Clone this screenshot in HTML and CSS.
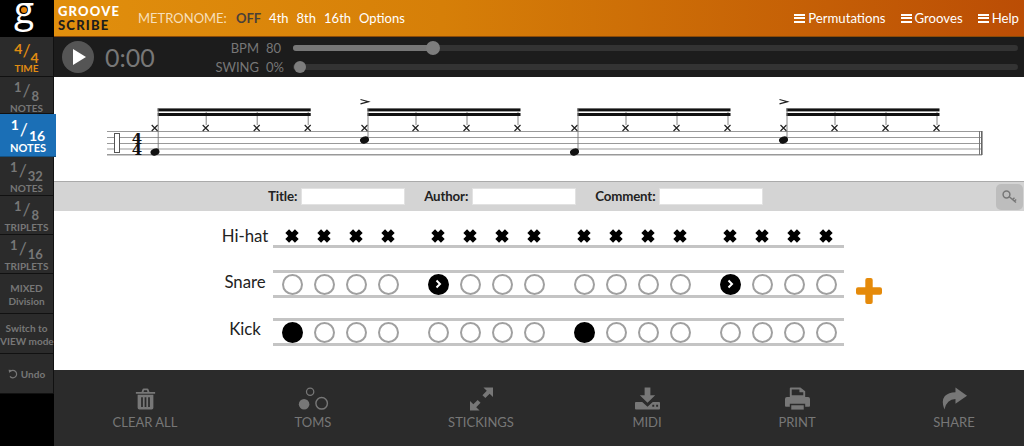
FILE: index.html
```html
<!DOCTYPE html>
<html lang="en">
<head>
  <meta charset="UTF-8">
  <title>Groove Scribe</title>
  <link rel="stylesheet" href="styles.css">
</head>
<body>

  <div class="sidebar">
    <div class="logo"><span class="logo-g">g</span><span class="logo-dot"></span></div>
    <div class="side-btn time">
      <div class="frac"><span class="num">4</span><span class="slash">/</span><span class="den">4</span></div>
      <div class="side-label">TIME</div>
    </div>
    <div class="side-btn eighth">
      <div class="frac"><span class="num">1</span><span class="slash">/</span><span class="den">8</span></div>
      <div class="side-label">NOTES</div>
    </div>
    <div class="side-btn active">
      <div class="frac"><span class="num">1</span><span class="slash">/</span><span class="den">16</span></div>
      <div class="side-label">NOTES</div>
    </div>
    <div class="side-btn">
      <div class="frac"><span class="num">1</span><span class="slash">/</span><span class="den">32</span></div>
      <div class="side-label">NOTES</div>
    </div>
    <div class="side-btn">
      <div class="frac"><span class="num">1</span><span class="slash">/</span><span class="den">8</span></div>
      <div class="side-label">TRIPLETS</div>
    </div>
    <div class="side-btn">
      <div class="frac"><span class="num">1</span><span class="slash">/</span><span class="den">16</span></div>
      <div class="side-label">TRIPLETS</div>
    </div>
    <div class="side-btn text-btn tall">MIXED<br>Division</div>
    <div class="side-btn text-btn tall">Switch to<br>VIEW mode</div>
    <div class="side-btn text-btn undo">
      <svg width="10" height="10" viewBox="0 0 10 10"><path d="M2.2 2.6 A3.7 3.7 0 1 1 2 7.4" fill="none" stroke="#777" stroke-width="1.2"/><path d="M0.6 0.8 L3.9 0.9 L1.2 4 Z" fill="#777"/></svg>
      Undo
    </div>
  </div>

  <div class="main">
    <div class="header">
      <div class="brand"><span class="groove">GROOVE</span><span class="scribe">SCRIBE</span></div>
      <div class="metronome">
        <span class="met-title">METRONOME:</span>
        <span class="met-off">OFF</span>
        <span class="met-opt">4th</span>
        <span class="met-opt">8th</span>
        <span class="met-opt">16th</span>
        <span class="met-opt">Options</span>
      </div>
      <div class="menus">
        <span class="menu"><span class="bars"></span>Permutations</span>
        <span class="menu"><span class="bars"></span>Grooves</span>
        <span class="menu"><span class="bars"></span>Help</span>
      </div>
    </div>

    <div class="playbar">
      <div class="play-btn"><span class="triangle"></span></div>
      <div class="clock">0:00</div>
      <div class="sliders">
        <div class="slider-row">
          <span class="slider-name">BPM</span><span class="slider-val">80</span>
          <div class="track"><div class="track-fill bpm-fill"></div><span class="thumb bpm-thumb"></span></div>
        </div>
        <div class="slider-row">
          <span class="slider-name">SWING</span><span class="slider-val">0%</span>
          <div class="track"><span class="thumb swing-thumb"></span></div>
        </div>
      </div>
    </div>

    <div class="sheet">
      <svg class="score" width="970" height="104" viewBox="54 77 970 104">
        <defs>
          <path id="xh" d="M-3 -3 L3 3 M-3 3 L3 -3" stroke="#222" stroke-width="1.2" fill="none"/>
          <g id="group">
            <use href="#xh" x="0" y="0"/><use href="#xh" x="51" y="0"/><use href="#xh" x="102" y="0"/><use href="#xh" x="153" y="0"/>
            <path d="M51.5 -16 V-3 M102.5 -16 V-3 M153.5 -16 V-3" stroke="#777" stroke-width="0.9"/>
            <rect x="3" y="-19.6" width="153" height="3" fill="#111"/>
            <rect x="3" y="-15" width="153" height="3" fill="#111"/>
          </g>
          <path id="accent" d="M-4 -2.2 L4 0 L-4 2.2" fill="none" stroke="#222" stroke-width="1.2"/>
        </defs>
        <path d="M107 131.5 H982 M107 137.5 H982 M107 143.5 H982 M107 149 H982" stroke="#999" stroke-width="1.1"/>
        <path d="M107 154.8 H982" stroke="#999" stroke-width="1.6"/>
        <rect x="114.5" y="133.5" width="5" height="19" fill="#fff" stroke="#555" stroke-width="1"/>
        <text class="timesig" x="137" y="143.5" text-anchor="middle">4</text>
        <text class="timesig" x="137" y="154.5" text-anchor="middle">4</text>
        <path d="M979.5 131 V155" stroke="#777" stroke-width="1"/>
        <path d="M981.8 131 V155" stroke="#666" stroke-width="1.6"/>

        <use href="#group" x="154.7" y="128"/>
        <path d="M158.2 108 V151" stroke="#777" stroke-width="0.9"/>
        <ellipse cx="155" cy="152" rx="4.6" ry="3.4" fill="#111" transform="rotate(-20 155 152)"/>

        <use href="#accent" x="364.5" y="101.7"/>
        <use href="#group" x="364.5" y="128"/>
        <path d="M368 108 V139" stroke="#777" stroke-width="0.9"/>
        <ellipse cx="364.5" cy="140" rx="4.6" ry="3.4" fill="#111" transform="rotate(-20 364.5 140)"/>

        <use href="#group" x="574.5" y="128"/>
        <path d="M578 108 V151" stroke="#777" stroke-width="0.9"/>
        <ellipse cx="574.5" cy="152" rx="4.6" ry="3.4" fill="#111" transform="rotate(-20 574.5 152)"/>

        <use href="#accent" x="783.5" y="101.7"/>
        <use href="#group" x="783.5" y="128"/>
        <path d="M787 108 V139" stroke="#777" stroke-width="0.9"/>
        <ellipse cx="783.5" cy="140" rx="4.6" ry="3.4" fill="#111" transform="rotate(-20 783.5 140)"/>
      </svg>
    </div>

    <div class="meta">
      <label class="meta-label title-label">Title:</label><span class="meta-input"></span>
      <label class="meta-label">Author:</label><span class="meta-input"></span>
      <label class="meta-label">Comment:</label><span class="meta-input"></span>
      <div class="key-btn">
        <svg width="16" height="14" viewBox="0 0 16 14"><circle cx="4.5" cy="4.5" r="3.4" fill="none" stroke="#777" stroke-width="1.5"/><path d="M7 6.5 L14 12.5 M10.5 9.5 L12.5 7.8 M12.4 11 L14.2 9.5" fill="none" stroke="#777" stroke-width="1.5"/></svg>
      </div>
    </div>

    <div class="editor">
      <div class="rows">
        <div class="row hihat-row">
          <div class="row-name">Hi-hat</div>
          <div class="notes">
            <div class="group">
              <div class="note"><svg class="cross" viewBox="0 0 14 14"><path d="M2.8 2.8 L11.2 11.2 M2.8 11.2 L11.2 2.8"/></svg></div>
              <div class="note"><svg class="cross" viewBox="0 0 14 14"><path d="M2.8 2.8 L11.2 11.2 M2.8 11.2 L11.2 2.8"/></svg></div>
              <div class="note"><svg class="cross" viewBox="0 0 14 14"><path d="M2.8 2.8 L11.2 11.2 M2.8 11.2 L11.2 2.8"/></svg></div>
              <div class="note"><svg class="cross" viewBox="0 0 14 14"><path d="M2.8 2.8 L11.2 11.2 M2.8 11.2 L11.2 2.8"/></svg></div>
            </div>
            <div class="group">
              <div class="note"><svg class="cross" viewBox="0 0 14 14"><path d="M2.8 2.8 L11.2 11.2 M2.8 11.2 L11.2 2.8"/></svg></div>
              <div class="note"><svg class="cross" viewBox="0 0 14 14"><path d="M2.8 2.8 L11.2 11.2 M2.8 11.2 L11.2 2.8"/></svg></div>
              <div class="note"><svg class="cross" viewBox="0 0 14 14"><path d="M2.8 2.8 L11.2 11.2 M2.8 11.2 L11.2 2.8"/></svg></div>
              <div class="note"><svg class="cross" viewBox="0 0 14 14"><path d="M2.8 2.8 L11.2 11.2 M2.8 11.2 L11.2 2.8"/></svg></div>
            </div>
            <div class="group">
              <div class="note"><svg class="cross" viewBox="0 0 14 14"><path d="M2.8 2.8 L11.2 11.2 M2.8 11.2 L11.2 2.8"/></svg></div>
              <div class="note"><svg class="cross" viewBox="0 0 14 14"><path d="M2.8 2.8 L11.2 11.2 M2.8 11.2 L11.2 2.8"/></svg></div>
              <div class="note"><svg class="cross" viewBox="0 0 14 14"><path d="M2.8 2.8 L11.2 11.2 M2.8 11.2 L11.2 2.8"/></svg></div>
              <div class="note"><svg class="cross" viewBox="0 0 14 14"><path d="M2.8 2.8 L11.2 11.2 M2.8 11.2 L11.2 2.8"/></svg></div>
            </div>
            <div class="group">
              <div class="note"><svg class="cross" viewBox="0 0 14 14"><path d="M2.8 2.8 L11.2 11.2 M2.8 11.2 L11.2 2.8"/></svg></div>
              <div class="note"><svg class="cross" viewBox="0 0 14 14"><path d="M2.8 2.8 L11.2 11.2 M2.8 11.2 L11.2 2.8"/></svg></div>
              <div class="note"><svg class="cross" viewBox="0 0 14 14"><path d="M2.8 2.8 L11.2 11.2 M2.8 11.2 L11.2 2.8"/></svg></div>
              <div class="note"><svg class="cross" viewBox="0 0 14 14"><path d="M2.8 2.8 L11.2 11.2 M2.8 11.2 L11.2 2.8"/></svg></div>
            </div>
          </div>
        </div>

        <div class="row snare-row">
          <div class="row-name">Snare</div>
          <div class="notes">
            <div class="group">
              <div class="note"><span class="circle"></span></div>
              <div class="note"><span class="circle"></span></div>
              <div class="note"><span class="circle"></span></div>
              <div class="note"><span class="circle"></span></div>
            </div>
            <div class="group">
              <div class="note"><span class="circle accented"><svg width="10" height="10" viewBox="0 0 10 10"><path d="M3.5 1.5 L7 5 L3.5 8.5" fill="none" stroke="#fff" stroke-width="2"/></svg></span></div>
              <div class="note"><span class="circle"></span></div>
              <div class="note"><span class="circle"></span></div>
              <div class="note"><span class="circle"></span></div>
            </div>
            <div class="group">
              <div class="note"><span class="circle"></span></div>
              <div class="note"><span class="circle"></span></div>
              <div class="note"><span class="circle"></span></div>
              <div class="note"><span class="circle"></span></div>
            </div>
            <div class="group">
              <div class="note"><span class="circle accented"><svg width="10" height="10" viewBox="0 0 10 10"><path d="M3.5 1.5 L7 5 L3.5 8.5" fill="none" stroke="#fff" stroke-width="2"/></svg></span></div>
              <div class="note"><span class="circle"></span></div>
              <div class="note"><span class="circle"></span></div>
              <div class="note"><span class="circle"></span></div>
            </div>
          </div>
          <svg class="add-btn" width="26" height="26" viewBox="0 0 26 26"><rect x="9.3" y="0" width="7.4" height="26" rx="2" fill="#e58a0a"/><rect x="0" y="9.3" width="26" height="7.4" rx="2" fill="#e58a0a"/></svg>
        </div>

        <div class="row kick-row">
          <div class="row-name">Kick</div>
          <div class="notes">
            <div class="group">
              <div class="note"><span class="circle filled"></span></div>
              <div class="note"><span class="circle"></span></div>
              <div class="note"><span class="circle"></span></div>
              <div class="note"><span class="circle"></span></div>
            </div>
            <div class="group">
              <div class="note"><span class="circle"></span></div>
              <div class="note"><span class="circle"></span></div>
              <div class="note"><span class="circle"></span></div>
              <div class="note"><span class="circle"></span></div>
            </div>
            <div class="group">
              <div class="note"><span class="circle filled"></span></div>
              <div class="note"><span class="circle"></span></div>
              <div class="note"><span class="circle"></span></div>
              <div class="note"><span class="circle"></span></div>
            </div>
            <div class="group">
              <div class="note"><span class="circle"></span></div>
              <div class="note"><span class="circle"></span></div>
              <div class="note"><span class="circle"></span></div>
              <div class="note"><span class="circle"></span></div>
            </div>
          </div>
        </div>
      </div>
    </div>

    <div class="footer">
      <div class="foot-item">
        <svg width="21" height="23" viewBox="0 0 24 26"><path d="M1 5 H7.5 L8.5 2 Q8.8 1 10 1 H14 Q15.2 1 15.5 2 L16.5 5 H23 V7 H1 Z M9.8 5 H14.2 L13.7 3 H10.3 Z" fill="#777" fill-rule="evenodd"/><path d="M3 8 H21 V23 Q21 25 19 25 H5 Q3 25 3 23 Z M7 11 V22 H9 V11 Z M11 11 V22 H13 V11 Z M15 11 V22 H17 V11 Z" fill="#777" fill-rule="evenodd"/></svg>
        <span>CLEAR ALL</span>
      </div>
      <div class="foot-item">
        <svg width="31" height="25" viewBox="0 0 31 25"><circle cx="12" cy="5" r="3.8" fill="none" stroke="#777" stroke-width="1.3"/><circle cx="5.7" cy="18" r="5.5" fill="#777"/><circle cx="24" cy="17" r="6" fill="none" stroke="#777" stroke-width="1.5"/></svg>
        <span>TOMS</span>
      </div>
      <div class="foot-item">
        <svg width="23" height="23" viewBox="0 0 24 24"><path d="M14 0 H24 V10 L20.5 6.5 L16 11 L13 8 L17.5 3.5 Z M0 24 V14 L3.5 17.5 L8 13 L11 16 L6.5 20.5 L10 24 Z" fill="#777"/></svg>
        <span>STICKINGS</span>
      </div>
      <div class="foot-item">
        <svg width="25" height="23" viewBox="0 0 26 24"><path d="M10 0 H16 V8 H21 L13 16 L5 8 H10 Z" fill="#777"/><path d="M1 15 H7.5 L13 20 L18.5 15 H25 Q26 15 26 16 V22 Q26 23 25 23 H1 Q0 23 0 22 V16 Q0 15 1 15 Z M18 18 V20 H20 V18 Z M22 18 V20 H24 V18 Z" fill="#777" fill-rule="evenodd"/></svg>
        <span>MIDI</span>
      </div>
      <div class="foot-item">
        <svg width="25" height="23" viewBox="0 0 26 24"><path d="M5 1 Q5 0 6 0 H16 L21 4 V10 H5 Z M7 2 V8 H19 V5 H15 V2 Z" fill="#777" fill-rule="evenodd"/><path d="M2 10 H24 Q26 10 26 12 V19 Q26 20 25 20 H21 V17 H5 V20 H1 Q0 20 0 19 V12 Q0 10 2 10 Z" fill="#777"/><rect x="6.5" y="18.5" width="13" height="4.5" fill="#777"/></svg>
        <span>PRINT</span>
      </div>
      <div class="foot-item">
        <svg width="27" height="23" viewBox="0 0 28 24"><path d="M15 0 L27 8.5 L15 17 V12 Q6 12 3.5 23 Q0 14 4 9 Q8 5 15 5 Z" fill="#777"/></svg>
        <span>SHARE</span>
      </div>
    </div>
  </div>

</body>
</html>
```

FILE: styles.css
```css
* {
  margin: 0;
  padding: 0;
  box-sizing: border-box;
}

html, body {
  width: 100%;
  height: 100%;
  overflow: hidden;
  font-family: Lato, Arial, sans-serif;
  background-color: #000;
}

body {
  display: flex;
}

/* left column */
.sidebar {
  width: 54px;
  flex-shrink: 0;
  position: relative;
  z-index: 2;
}

.logo {
  height: 37px;
  background-color: #000;
  position: relative;
}

.logo-g {
  display: block;
  width: 48px;
  text-align: center;
  font-family: "Open Sans", sans-serif;
  font-weight: 400;
  font-size: 37px;
  line-height: 17px;
  color: #fff;
}

.logo-dot {
  position: absolute;
  left: 21px;
  top: 7px;
  width: 6px;
  height: 6px;
  border-radius: 50%;
  background-color: #e8860c;
}

.side-btn {
  height: 39px;
  width: 54px;
  padding-top: 1px;
  background-color: #2b2b2b;
  border-bottom: 1px solid #111;
  border-right: 1px solid #111;
  color: #777;
  text-align: center;
}

.side-btn.time {
  height: 40px;
  color: #e08c12;
}

.side-btn.eighth {
  height: 37px;
}

.side-btn.active {
  height: 43px;
  width: 56px;
  background-color: #1b6fb6;
  border: none;
  border-bottom: 1px solid #15507f;
  color: #fff;
  padding-top: 2px;
}

.frac {
  height: 24px;
  display: flex;
  align-items: center;
  justify-content: center;
  font-size: 13px;
  line-height: 12px;
  font-weight: 700;
  white-space: nowrap;
}

.frac .num {
  margin-bottom: 6px;
}

.frac .slash {
  font-weight: 400;
  font-size: 18px;
  line-height: 18px;
  margin: 0 1px;
}

.frac .den {
  margin-top: 12px;
}

.time .frac {
  font-size: 14px;
}

.time .frac .num {
  margin-bottom: 3px;
}

.time .frac .slash {
  margin: 0;
}

.time .frac .den {
  margin-top: 16px;
}

.active .frac {
  height: 26px;
  font-size: 14px;
}

.active .frac .num {
  margin-bottom: 8px;
}

.active .frac .den {
  margin-top: 14px;
}

.side-label {
  font-size: 10px;
  font-weight: 700;
  line-height: 12px;
}

.active .side-label {
  font-size: 11px;
}

.text-btn {
  font-size: 10px;
  font-weight: 700;
  line-height: 12.5px;
  white-space: nowrap;
}

.tall {
  height: 40px;
  padding-top: 8px;
}

.undo {
  height: 40px;
  display: flex;
  align-items: center;
  justify-content: center;
  gap: 3px;
}

/* right column */
.main {
  flex: 1;
  display: flex;
  flex-direction: column;
  min-width: 0;
  height: 446px;
}

.header {
  height: 37px;
  flex-shrink: 0;
  display: flex;
  align-items: center;
  background: linear-gradient(90deg, #e18f0d 0%, #d67f08 40%, #bb4d05 100%);
  border-bottom: 1px solid #8a4a08;
  padding-left: 4px;
}

.brand {
  display: flex;
  flex-direction: column;
  font-size: 13px;
  font-weight: 900;
  letter-spacing: 1.2px;
  line-height: 14px;
  width: 80px;
}

.groove {
  color: #fff;
}

.scribe {
  color: #1d1d1d;
}

.metronome {
  display: flex;
  align-items: center;
  gap: 8px;
  font-size: 13px;
  color: #fff;
}

.met-title {
  color: #f7dfba;
  margin-right: 1px;
}

.met-off {
  color: #4a4038;
  font-weight: 700;
}

.menus {
  margin-left: auto;
  display: flex;
  gap: 15px;
  padding-right: 5px;
  font-size: 13.2px;
  color: #fff;
}

.menu {
  display: flex;
  align-items: center;
  gap: 3px;
}

.bars {
  width: 11px;
  height: 9px;
  border-top: 2px solid #fff;
  border-bottom: 2px solid #fff;
}

.bars::after {
  content: "";
  display: block;
  height: 2px;
  margin-top: 1.5px;
  background-color: #fff;
}

.playbar {
  height: 40px;
  flex-shrink: 0;
  background-color: #1c1c1c;
  display: flex;
  align-items: center;
  padding-left: 8px;
}

.play-btn {
  width: 32px;
  height: 32px;
  border-radius: 50%;
  background-color: #555;
  display: flex;
  align-items: center;
  justify-content: center;
}

.triangle {
  width: 0;
  height: 0;
  margin-left: 3px;
  border-left: 13px solid #fff;
  border-top: 8px solid transparent;
  border-bottom: 8px solid transparent;
}

.clock {
  font-size: 25px;
  color: #777;
  margin-left: 11px;
  width: 108px;
}

.sliders {
  flex: 1;
  display: flex;
  flex-direction: column;
  gap: 1px;
}

.slider-row {
  display: flex;
  align-items: center;
  height: 18px;
  font-size: 13px;
  color: #777;
}

.slider-name {
  width: 46px;
  text-align: right;
  white-space: nowrap;
}

.slider-val {
  width: 34px;
  padding-left: 7px;
}

.track {
  width: 725px;
  height: 6px;
  border-radius: 3px;
  background-color: #333;
  position: relative;
}

.track-fill {
  height: 6px;
  border-radius: 3px;
  background-color: #777;
}

.bpm-fill {
  width: 140px;
}

.thumb {
  position: absolute;
  border-radius: 50%;
  background-color: #7d7d7d;
}

.bpm-thumb {
  left: 133px;
  top: -4px;
  width: 14px;
  height: 14px;
}

.swing-thumb {
  left: 1px;
  top: -3px;
  width: 12px;
  height: 12px;
}

.sheet {
  height: 104px;
  flex-shrink: 0;
  background-color: #fff;
}

.score {
  display: block;
}

.timesig {
  font-family: "DejaVu Serif", serif;
  font-weight: 700;
  font-size: 15px;
  fill: #111;
}

.meta {
  height: 30px;
  flex-shrink: 0;
  background-color: #d4d4d4;
  border-top: 1px solid #aaa;
  display: flex;
  align-items: center;
  padding-left: 214px;
  font-size: 13.3px;
  letter-spacing: -0.15px;
  color: #222;
}

.meta-label {
  font-weight: 700;
  margin-left: 19px;
  margin-right: 4px;
  padding-bottom: 1px;
}

.title-label {
  margin-left: 0;
}

.meta-input {
  width: 104px;
  height: 17px;
  background-color: #fff;
  border: 1px solid #e2e2e2;
}

.key-btn {
  margin-left: auto;
  margin-right: 1px;
  width: 27px;
  height: 26px;
  border-radius: 5px;
  background-color: #bdbdbd;
  display: flex;
  align-items: center;
  justify-content: center;
}

.editor {
  height: 159px;
  flex-shrink: 0;
  background-color: #fff;
  padding-top: 12px;
}

.rows {
  display: flex;
  flex-direction: column;
}

.row {
  display: flex;
  align-items: center;
}

.hihat-row {
  height: 25px;
}

.snare-row {
  margin-top: 22px;
  height: 28px;
}

.kick-row {
  margin-top: 20px;
  height: 28px;
}

.row-name {
  width: 219px;
  padding-left: 163px;
  text-align: center;
  font-size: 16.8px;
  color: #222;
}

.snare-row .row-name {
  margin-bottom: 6px;
}

.kick-row .row-name {
  margin-bottom: 8px;
}

.notes {
  width: 571px;
  height: 100%;
  display: flex;
  gap: 18px;
  padding-left: 3px;
  border-bottom: 3px solid #c4c4c4;
}

.snare-row .notes,
.kick-row .notes {
  border-top: 3px solid #c4c4c4;
}

.group {
  display: flex;
}

.note {
  width: 32px;
  display: flex;
  align-items: center;
  justify-content: center;
}

.hihat-row .note {
  align-items: flex-start;
  padding-top: 5px;
}

.cross {
  width: 16px;
  height: 16px;
  fill: none;
  stroke: #000;
  stroke-width: 4.6;
}

.circle {
  width: 21px;
  height: 21px;
  border-radius: 50%;
  border: 2px solid #a0a0a0;
  background-color: #fff;
  display: flex;
  align-items: center;
  justify-content: center;
}

.circle.filled,
.circle.accented {
  background-color: #000;
  border-color: #000;
}

.add-btn {
  margin-left: 12px;
  margin-top: 14px;
  flex-shrink: 0;
}

.footer {
  height: 76px;
  flex-shrink: 0;
  background-color: #2b2b2b;
  display: grid;
  grid-template-columns: 168px 168px 166px 150px 157px 100px;
  padding-left: 41px;
  padding-top: 17px;
}

.foot-item {
  width: 100px;
  display: flex;
  flex-direction: column;
  align-items: center;
  color: #777;
  font-size: 13px;
  line-height: 16px;
}

.foot-item svg {
  height: 24px;
  margin-bottom: 3px;
}
```
